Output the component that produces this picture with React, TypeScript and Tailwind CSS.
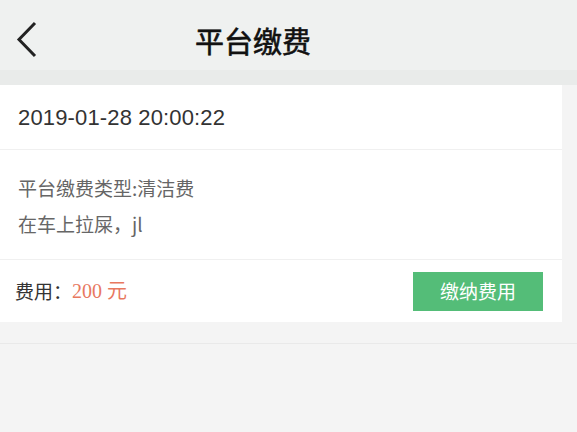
import React from "react";

export default function App() {
  const cjk = { fontFamily: '"Noto Sans CJK SC", "Noto Sans", sans-serif' };
  return (
    <div className="w-[577px] h-[432px] bg-[#f4f4f4] overflow-hidden" style={cjk}>
      <div className="h-[70px] bg-[#eff1f0] flex items-center pt-[10px]">
        <svg width="24" height="40" viewBox="0 0 24 40" className="ml-[14px]">
          <path d="M21 3 L5 19.5 L21 36" fill="none" stroke="#222" strokeWidth="3" />
        </svg>
        <div className="ml-[157px] text-[29px] font-normal text-[#111] leading-none [-webkit-text-stroke:0.6px_#111]">平台缴费</div>
      </div>
      <div className="h-[15px] bg-[#e9ebea]" />
      <div className="w-[562px] bg-white">
        <div className="h-[65px] flex items-center pl-[18px] border-b border-[#f0f0f0]">
          <span
            className="text-[22px] text-[#333] tracking-[0.15px]"
            style={{ fontFamily: '"Liberation Sans", Arial, sans-serif' }}
          >
            2019-01-28 20:00:22
          </span>
        </div>
        <div className="pt-[20px] pb-[17px] pl-[18px] text-[19px] text-[#666] leading-[36px]">
          <div>平台缴费类型:清洁费</div>
          <div>在车上拉屎，jl</div>
        </div>
        <div className="h-[63px] flex items-center justify-between border-t border-[#f0f0f0] pl-[15px] pr-[19px]">
          <div className="flex items-center text-[19px]">
            <span className="text-[#333]">费用：</span>
            <span
              className="text-[#e8785f] text-[20px]"
              style={{ fontFamily: '"Liberation Serif", "Noto Sans CJK SC", serif' }}
            >
              200 元
            </span>
          </div>
          <button className="w-[130px] h-[39px] bg-[#54bd78] text-white text-[19px] flex items-center justify-center">
            缴纳费用
          </button>
        </div>
      </div>
      <div className="mt-[21px] border-t border-[#e9e9e9]" />
    </div>
  );
}
